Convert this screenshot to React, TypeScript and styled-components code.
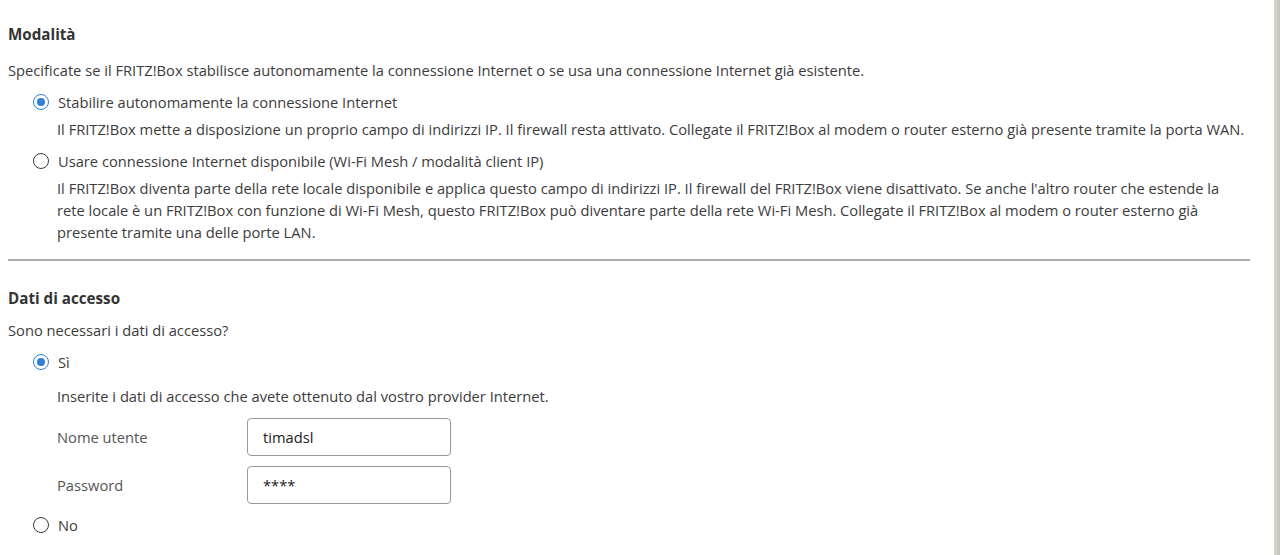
import React from "react";
import styled, { createGlobalStyle } from "styled-components";

const GlobalStyle = createGlobalStyle`
  html, body {
    margin: 0;
    padding: 0;
    background: #fff;
  }
  body {
    font-family: "Open Sans", "Noto Sans", sans-serif;
    color: #3c3c3c;
  }
`;

const Page = styled.div`
  display: flex;
  width: 1280px;
  height: 555px;
  overflow: hidden;
`;

const Content = styled.main`
  flex: 1;
  padding: 0 24px 0 8px;
`;

const ScrollEdge = styled.div`
  width: 6px;
  background: linear-gradient(90deg, #d8d8d4, #c4c4bf);
`;

const Section = styled.section<{ $top: number }>`
  padding-top: ${(p) => p.$top}px;
`;

const Heading = styled.h2`
  margin: 0;
  font-size: 15.2px;
  font-weight: 700;
  line-height: 22px;
  color: #333;
`;

const Intro = styled.p<{ $gap: number }>`
  margin: ${(p) => p.$gap}px 0 0;
  font-size: 14.7px;
  line-height: 22px;
`;

const Options = styled.div`
  display: flex;
  flex-direction: column;
  padding-left: 25px;
`;

const OptionRow = styled.label`
  display: flex;
  align-items: center;
  gap: 9px;
  margin-top: 10px;
  font-size: 14.7px;
  line-height: 22px;
`;

const Radio = styled.span<{ $checked?: boolean }>`
  box-sizing: border-box;
  width: 16px;
  height: 16px;
  border-radius: 50%;
  border: 1.6px solid ${(p) => (p.$checked ? "#2f7ed8" : "#3a3a3a")};
  display: flex;
  align-items: center;
  justify-content: center;
  &::after {
    content: "";
    width: 8px;
    height: 8px;
    border-radius: 50%;
    background: ${(p) => (p.$checked ? "#2f7ed8" : "transparent")};
  }
`;

const Explain = styled.p<{ $gap: number }>`
  margin: ${(p) => p.$gap}px 2px 0 24px;
  font-size: 14.7px;
  line-height: 22px;
`;

const Divider = styled.hr`
  margin: 16px 0 0;
  border: 0;
  height: 2px;
  background: #acacac;
`;

const FieldGrid = styled.div`
  display: grid;
  grid-template-columns: 190px 204px;
  row-gap: 10px;
  align-items: center;
  margin: 11px 0 0 24px;
`;

const FieldLabel = styled.span`
  font-size: 14.7px;
  color: #555;
`;

const Input = styled.input`
  box-sizing: border-box;
  width: 204px;
  height: 38px;
  border: 1px solid #9a9a9a;
  border-radius: 4px;
  padding: 0 15px;
  font-family: inherit;
  font-size: 14.7px;
  color: #222;
  outline: none;
`;

export default function App() {
  return (
    <Page>
      <GlobalStyle />
      <Content>
        <Section $top={23}>
          <Heading>Modalità</Heading>
          <Intro $gap={14}>
            Specificate se il FRITZ!Box stabilisce autonomamente la connessione
            Internet o se usa una connessione Internet già esistente.
          </Intro>
          <Options>
            <OptionRow>
              <Radio $checked />
              Stabilire autonomamente la connessione Internet
            </OptionRow>
            <Explain $gap={5}>
              Il FRITZ!Box mette a disposizione un proprio campo di indirizzi IP.
              Il firewall resta attivato. Collegate il FRITZ!Box al modem o
              router esterno già presente tramite la porta WAN.
            </Explain>
            <OptionRow>
              <Radio />
              Usare connessione Internet disponibile (Wi-Fi Mesh / modalità
              client IP)
            </OptionRow>
            <Explain $gap={5}>
              Il FRITZ!Box diventa parte della rete locale disponibile e applica
              questo campo di indirizzi IP. Il firewall del FRITZ!Box viene
              disattivato. Se anche l'altro router che estende la rete locale è
              un FRITZ!Box con funzione di Wi-Fi Mesh, questo FRITZ!Box può
              diventare parte della rete Wi-Fi Mesh. Collegate il FRITZ!Box al
              modem o router esterno già presente tramite una delle porte LAN.
            </Explain>
          </Options>
          <Divider />
        </Section>
        <Section $top={26}>
          <Heading>Dati di accesso</Heading>
          <Intro $gap={10}>Sono necessari i dati di accesso?</Intro>
          <Options>
            <OptionRow>
              <Radio $checked />
              Sì
            </OptionRow>
            <Explain $gap={12}>
              Inserite i dati di accesso che avete ottenuto dal vostro provider
              Internet.
            </Explain>
            <FieldGrid>
              <FieldLabel>Nome utente</FieldLabel>
              <Input defaultValue="timadsl" />
              <FieldLabel>Password</FieldLabel>
              <Input defaultValue="****" />
            </FieldGrid>
            <OptionRow>
              <Radio />
              No
            </OptionRow>
          </Options>
        </Section>
      </Content>
      <ScrollEdge />
    </Page>
  );
}
